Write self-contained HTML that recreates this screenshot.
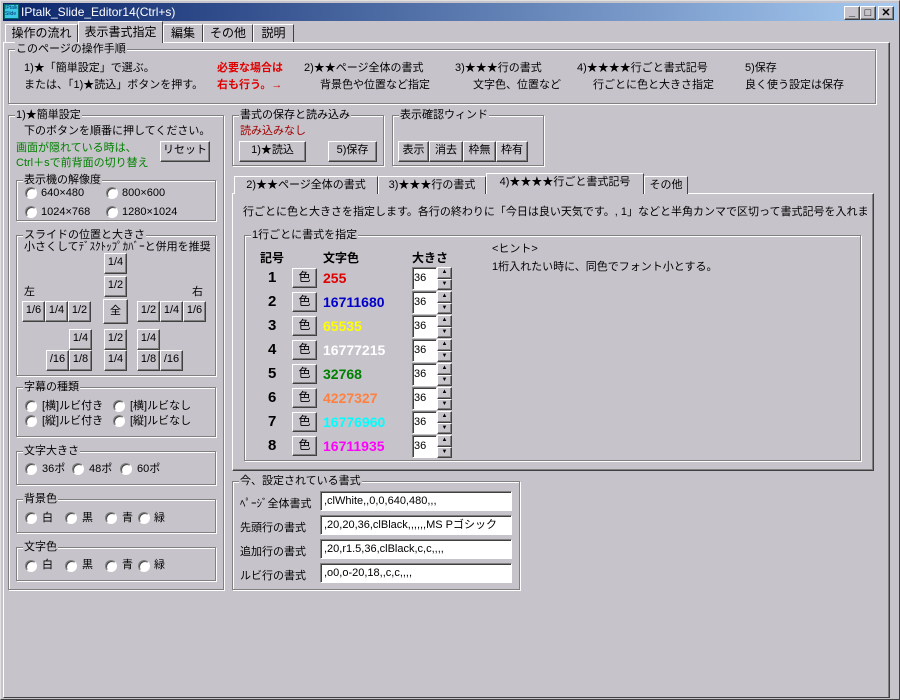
<!DOCTYPE html>
<html><head><meta charset="utf-8"><style>
*{box-sizing:border-box;margin:0;padding:0}
body{width:900px;height:700px;background:#c6c4ca;position:relative;overflow:hidden;font:11px "Liberation Sans","Noto Sans CJK JP",sans-serif;color:#000}
.a{position:absolute;white-space:nowrap;line-height:14px}
.g{position:absolute;border:1px solid #808080;box-shadow:inset 1px 1px 0 #fff,1px 1px 0 #fff}
.g>.l{position:absolute;left:6px;top:-8px;background:#c6c4ca;padding:0 1px;line-height:14px;white-space:nowrap}
.b{position:absolute;background:#c6c4ca;border:1px solid;border-color:#fff #404040 #404040 #fff;box-shadow:inset -1px -1px 0 #808080;text-align:center;line-height:17px;white-space:nowrap}
.r{position:absolute;width:12px;height:12px;border-radius:50%;background:#fff;border:1px solid;border-color:#808080 #fff #fff #808080;box-shadow:inset 1px 1px 0 #404040}
.e{position:absolute;background:#fff;border:1px solid;border-color:#808080 #fff #fff #808080;box-shadow:inset 1px 1px 0 #404040;padding-left:3px;line-height:18px;white-space:nowrap;overflow:hidden}
.t{position:absolute;border:1px solid;border-color:#fff #404040 transparent #fff;border-bottom:none;text-align:center;line-height:17px;white-space:nowrap;background:#c6c4ca}
.n{font:bold 15px "Liberation Sans",sans-serif}
.v{font:bold 14px "Liberation Sans",sans-serif}
</style></head><body>
<div style="position:absolute;left:0;top:0;width:900px;height:700px;border:1px solid;border-color:#e0e0e0 #404040 #404040 #e0e0e0"></div>
<div style="position:absolute;left:3px;top:3px;width:894px;height:18px;background:linear-gradient(90deg,#0a246a,#a6caf0)"></div>
<div style="position:absolute;left:4px;top:4px;width:15px;height:15px;background:#3cc8e8;border:1px solid #066;font:5px sans-serif;color:#036;line-height:6px;overflow:hidden">IPtalk<br>Slide</div>
<div class="a" style="left:21px;top:5px;color:#fff;font-size:12px">IPtalk_Slide_Editor14(Ctrl+s)</div>
<div class="b" style="left:844px;top:6px;width:16px;height:14px;line-height:10px;font-weight:bold">_</div>
<div class="b" style="left:860px;top:6px;width:16px;height:14px;line-height:12px;font-size:11px">□</div>
<div class="b" style="left:878px;top:6px;width:16px;height:14px;line-height:12px;font-weight:bold;font-size:11px">✕</div>
<div style="position:absolute;left:3px;top:42px;width:887px;height:656px;border:1px solid;border-color:#fff #404040 #404040 #fff;box-shadow:inset -1px 0 0 #808080"></div>
<div class="t" style="left:5px;top:24px;width:73px;height:18px;font-size:12px">操作の流れ</div>
<div class="t" style="left:78px;top:21px;width:85px;height:22px;z-index:2;line-height:20px;font-size:12px">表示書式指定</div>
<div class="t" style="left:163px;top:24px;width:40px;height:18px;font-size:12px">編集</div>
<div class="t" style="left:203px;top:24px;width:50px;height:18px;font-size:12px">その他</div>
<div class="t" style="left:253px;top:24px;width:41px;height:18px;font-size:12px">説明</div>
<div class="g" style="left:8px;top:49px;width:868px;height:55px"><span class="l">このページの操作手順</span></div>
<div class="a" style="left:24px;top:61px">1)★「簡単設定」で選ぶ。</div>
<div class="a" style="left:24px;top:78px">または、「1)★読込」ボタンを押す。</div>
<div class="a" style="left:217px;top:61px;color:#e00000;font-weight:bold">必要な場合は</div>
<div class="a" style="left:217px;top:78px;color:#e00000;font-weight:bold">右も行う。→</div>
<div class="a" style="left:304px;top:61px">2)★★ページ全体の書式</div>
<div class="a" style="left:320px;top:78px">背景色や位置など指定</div>
<div class="a" style="left:455px;top:61px">3)★★★行の書式</div>
<div class="a" style="left:473px;top:78px">文字色、位置など</div>
<div class="a" style="left:577px;top:61px">4)★★★★行ごと書式記号</div>
<div class="a" style="left:593px;top:78px">行ごとに色と大きさ指定</div>
<div class="a" style="left:745px;top:61px">5)保存</div>
<div class="a" style="left:745px;top:78px">良く使う設定は保存</div>
<div class="g" style="left:8px;top:115px;width:216px;height:475px"><span class="l">1)★簡単設定</span></div>
<div class="a" style="left:24px;top:124px">下のボタンを順番に押してください。</div>
<div class="a" style="left:16px;top:141px;color:#008000">画面が隠れている時は、</div>
<div class="a" style="left:16px;top:156px;color:#008000">Ctrl＋sで前背面の切り替え</div>
<div class="b" style="left:160px;top:141px;width:50px;height:21px">リセット</div>
<div class="g" style="left:16px;top:180px;width:200px;height:41px"><span class="l">表示機の解像度</span></div>
<div class="r" style="left:25px;top:187px"></div><div class="a" style="left:41px;top:186px">640×480</div>
<div class="r" style="left:106px;top:187px"></div><div class="a" style="left:122px;top:186px">800×600</div>
<div class="r" style="left:25px;top:206px"></div><div class="a" style="left:41px;top:205px">1024×768</div>
<div class="r" style="left:106px;top:206px"></div><div class="a" style="left:122px;top:205px">1280×1024</div>
<div class="g" style="left:16px;top:235px;width:200px;height:141px"><span class="l">スライドの位置と大きさ</span></div>
<div class="a" style="left:24px;top:240px">小さくしてﾃﾞｽｸﾄｯﾌﾟｶﾊﾞｰと併用を推奨</div>
<div class="b" style="left:104px;top:253px;width:23px;height:21px">1/4</div>
<div class="b" style="left:104px;top:276px;width:23px;height:21px">1/2</div>
<div class="a" style="left:24px;top:285px">左</div><div class="a" style="left:192px;top:285px">右</div>
<div class="b" style="left:22px;top:301px;width:23px;height:21px">1/6</div>
<div class="b" style="left:45px;top:301px;width:23px;height:21px">1/4</div>
<div class="b" style="left:68px;top:301px;width:23px;height:21px">1/2</div>
<div class="b" style="left:103px;top:299px;width:25px;height:25px;line-height:23px">全</div>
<div class="b" style="left:137px;top:301px;width:23px;height:21px">1/2</div>
<div class="b" style="left:160px;top:301px;width:23px;height:21px">1/4</div>
<div class="b" style="left:183px;top:301px;width:23px;height:21px">1/6</div>
<div class="b" style="left:69px;top:329px;width:23px;height:21px">1/4</div>
<div class="b" style="left:104px;top:329px;width:23px;height:21px">1/2</div>
<div class="b" style="left:137px;top:329px;width:23px;height:21px">1/4</div>
<div class="b" style="left:46px;top:350px;width:23px;height:21px">/16</div>
<div class="b" style="left:69px;top:350px;width:23px;height:21px">1/8</div>
<div class="b" style="left:104px;top:350px;width:23px;height:21px">1/4</div>
<div class="b" style="left:137px;top:350px;width:23px;height:21px">1/8</div>
<div class="b" style="left:160px;top:350px;width:23px;height:21px">/16</div>
<div class="g" style="left:16px;top:387px;width:200px;height:50px"><span class="l">字幕の種類</span></div>
<div class="r" style="left:25px;top:400px"></div><div class="a" style="left:42px;top:399px">[横]ルビ付き</div>
<div class="r" style="left:113px;top:400px"></div><div class="a" style="left:130px;top:399px">[横]ルビなし</div>
<div class="r" style="left:25px;top:415px"></div><div class="a" style="left:42px;top:414px">[縦]ルビ付き</div>
<div class="r" style="left:113px;top:415px"></div><div class="a" style="left:130px;top:414px">[縦]ルビなし</div>
<div class="g" style="left:16px;top:451px;width:200px;height:34px"><span class="l">文字大きさ</span></div>
<div class="r" style="left:25px;top:463px"></div><div class="a" style="left:42px;top:462px">36ポ</div>
<div class="r" style="left:72px;top:463px"></div><div class="a" style="left:89px;top:462px">48ポ</div>
<div class="r" style="left:120px;top:463px"></div><div class="a" style="left:137px;top:462px">60ポ</div>
<div class="g" style="left:16px;top:499px;width:200px;height:34px"><span class="l">背景色</span></div>
<div class="r" style="left:25px;top:512px"></div><div class="a" style="left:42px;top:511px">白</div>
<div class="r" style="left:65px;top:512px"></div><div class="a" style="left:82px;top:511px">黒</div>
<div class="r" style="left:105px;top:512px"></div><div class="a" style="left:122px;top:511px">青</div>
<div class="r" style="left:138px;top:512px"></div><div class="a" style="left:154px;top:511px">緑</div>
<div class="g" style="left:16px;top:547px;width:200px;height:34px"><span class="l">文字色</span></div>
<div class="r" style="left:25px;top:560px"></div><div class="a" style="left:42px;top:558px">白</div>
<div class="r" style="left:65px;top:560px"></div><div class="a" style="left:82px;top:558px">黒</div>
<div class="r" style="left:105px;top:560px"></div><div class="a" style="left:122px;top:558px">青</div>
<div class="r" style="left:138px;top:560px"></div><div class="a" style="left:154px;top:558px">緑</div>
<div class="g" style="left:232px;top:115px;width:152px;height:51px"><span class="l">書式の保存と読み込み</span></div>
<div class="a" style="left:240px;top:124px;color:#a00000">読み込みなし</div>
<div class="b" style="left:239px;top:141px;width:67px;height:21px">1)★読込</div>
<div class="b" style="left:328px;top:141px;width:49px;height:21px">5)保存</div>
<div class="g" style="left:392px;top:115px;width:152px;height:51px"><span class="l">表示確認ウィンド</span></div>
<div class="b" style="left:398px;top:141px;width:31px;height:21px">表示</div>
<div class="b" style="left:429px;top:141px;width:34px;height:21px">消去</div>
<div class="b" style="left:463px;top:141px;width:33px;height:21px">枠無</div>
<div class="b" style="left:496px;top:141px;width:32px;height:21px">枠有</div>
<div style="position:absolute;left:232px;top:193px;width:642px;height:278px;border:1px solid;border-color:#fff #404040 #404040 #fff;box-shadow:inset -1px -1px 0 #808080"></div>
<div class="t" style="left:234px;top:176px;width:144px;height:18px">2)★★ページ全体の書式</div>
<div class="t" style="left:378px;top:176px;width:108px;height:18px">3)★★★行の書式</div>
<div class="t" style="left:486px;top:173px;width:158px;height:21px;z-index:2">4)★★★★行ごと書式記号</div>
<div class="t" style="left:644px;top:176px;width:44px;height:18px">その他</div>
<div class="a" style="left:243px;top:205px;width:627px;overflow:hidden">行ごとに色と大きさを指定します。各行の終わりに「今日は良い天気です。, 1」などと半角カンマで区切って書式記号を入れま</div>
<div class="g" style="left:244px;top:235px;width:617px;height:226px"><span class="l">1行ごとに書式を指定</span></div>
<div class="a" style="left:260px;top:251px;font-weight:bold;font-size:12px">記号</div>
<div class="a" style="left:323px;top:251px;font-weight:bold;font-size:12px">文字色</div>
<div class="a" style="left:412px;top:251px;font-weight:bold;font-size:12px">大きさ</div>
<div class="a" style="left:492px;top:242px">&lt;ヒント&gt;</div>
<div class="a" style="left:492px;top:260px">1桁入れたい時に、同色でフォント小とする。</div>
<div id="rows"></div>
<script>
var c=[["255","#e00000"],["16711680","#0000c8"],["65535","#ffff00"],["16777215","#ffffff"],["32768","#008000"],["4227327","#ff8040"],["16776960","#00ffff"],["16711935","#ff00ff"]],h="";
for(var i=0;i<8;i++){var y=270+i*24;
h+='<div class="a n" style="left:268px;top:'+y+'px;line-height:16px">'+(i+1)+'</div>'+
'<div class="b" style="left:292px;top:'+(y-2)+'px;width:25px;height:20px;font-size:12px">色</div>'+
'<div class="a v" style="left:323px;top:'+y+'px;line-height:16px;color:'+c[i][1]+'">'+c[i][0]+'</div>'+
'<div class="e" style="left:412px;top:'+(y-3)+'px;width:25px;height:23px;padding-left:1px;line-height:20px">36</div>'+
'<div class="b" style="left:437px;top:'+(y-3)+'px;width:15px;height:12px;font-size:6px;line-height:9px">▲</div>'+
'<div class="b" style="left:437px;top:'+(y+9)+'px;width:15px;height:11px;font-size:6px;line-height:9px">▼</div>';}
document.getElementById("rows").innerHTML=h;
</script>
<div class="g" style="left:232px;top:481px;width:288px;height:109px"><span class="l">今、設定されている書式</span></div>
<div class="a" style="left:240px;top:497px">ﾍﾟｰｼﾞ全体書式</div>
<div class="a" style="left:240px;top:521px">先頭行の書式</div>
<div class="a" style="left:240px;top:545px">追加行の書式</div>
<div class="a" style="left:240px;top:569px">ルビ行の書式</div>
<div class="e" style="left:320px;top:491px;width:192px;height:20px">,clWhite,,0,0,640,480,,,</div>
<div class="e" style="left:320px;top:515px;width:192px;height:20px">,20,20,36,clBlack,,,,,,MS Pゴシック</div>
<div class="e" style="left:320px;top:539px;width:192px;height:20px">,20,r1.5,36,clBlack,c,c,,,,</div>
<div class="e" style="left:320px;top:563px;width:192px;height:20px">,o0,o-20,18,,c,c,,,,</div>
</body></html>
